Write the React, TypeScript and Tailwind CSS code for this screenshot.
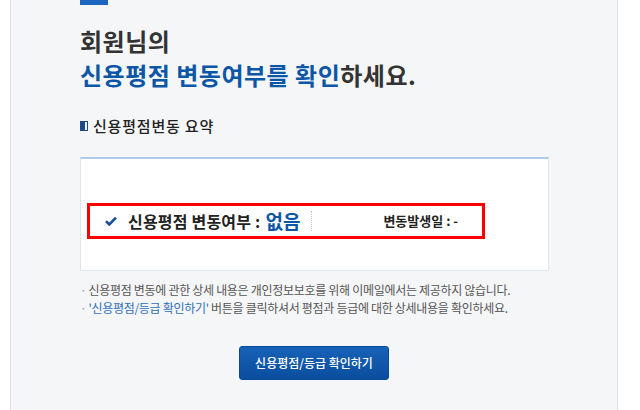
import React from 'react';

const KR = '[font-family:"Noto_Sans_CJK_KR","Noto_Sans",sans-serif]';

function CheckIcon() {
  return (
    <svg width="12" height="10" viewBox="0 0 12 10" className="shrink-0">
      <path d="M1 5.2l3.3 3.3L11 1.6" fill="none" stroke="#174f9e" strokeWidth="2.6" strokeLinejoin="miter" />
    </svg>
  );
}

function BookIcon() {
  return (
    <span className="mr-[5px] flex h-[10px] w-[8px] shrink-0 border border-[#1f4a86]">
      <span className="h-full w-[4px] bg-[#1f4a86]" />
    </span>
  );
}

export default function App() {
  return (
    <div className={`min-h-[410px] w-[640px] bg-white pl-[10px] ${KR}`}>
      <div className="flex min-h-[410px] w-[608px] flex-col border-x border-[#dfe4ee] bg-[#f5f6f8] pl-[69px]">
        {/* top accent */}
        <div className="h-[5px] w-[28px] bg-[#1a65c0]" />

        {/* heading */}
        <h1 className="mt-[19px] text-[24px] font-bold leading-[34px] tracking-[0.5px] text-[#333]">
          회원님의
          <br />
          <span className="text-[#0c56a8]">신용평점 변동여부를 확인</span>하세요.
        </h1>

        {/* sub heading */}
        <div className="mt-[24px] flex h-[20px] items-center text-[15px] font-medium tracking-[0.8px] text-[#222]">
          <BookIcon />
          신용평점변동 요약
        </div>

        {/* summary box */}
        <div className="mt-[21px] h-[114px] w-[469px] border border-t-2 border-[#e1e5ec] border-t-[#aecbe8] bg-white pl-[6px] pt-[44px]">
          <div className="flex h-[36px] w-[398px] items-center border-[3px] border-[#ff0000] pl-[15px]">
            <CheckIcon />
            <span className="ml-[11px] text-[16px] font-bold tracking-[0.2px] text-[#222]">신용평점 변동여부 :</span>
            <span className="ml-[5px] text-[19px] font-bold text-[#0c56a8]">없음</span>
            <span className="ml-[11px] h-[20px] border-l border-dotted border-[#c8c8c8]" />
            <span className="ml-[71px] text-[13px] font-bold text-[#222]">변동발생일 : -</span>
          </div>
        </div>

        {/* notes */}
        <div className="mt-[10px] text-[12px] leading-[18px] tracking-[-0.3px] text-[#555]">
          <p className="flex items-start">
            <span className="mr-[2px] text-[#999]">·</span>
            신용평점 변동에 관한 상세 내용은 개인정보보호를 위해 이메일에서는 제공하지 않습니다.
          </p>
          <p className="flex items-start">
            <span className="mr-[2px] text-[#999]">·</span>
            <span className="text-[#2f6fbf]">'신용평점/등급 확인하기'</span>
            &nbsp;버튼을 클릭하셔서 평점과 등급에 대한 상세내용을 확인하세요.
          </p>
        </div>

        {/* action */}
        <button className="ml-[159px] mt-[29px] flex h-[34px] w-[150px] items-center justify-center rounded-[3px] border border-[#0a4a94] bg-gradient-to-b from-[#1762b8] to-[#0a4d9d] text-[12px] font-medium text-white">
          신용평점/등급 확인하기
        </button>
      </div>
    </div>
  );
}
